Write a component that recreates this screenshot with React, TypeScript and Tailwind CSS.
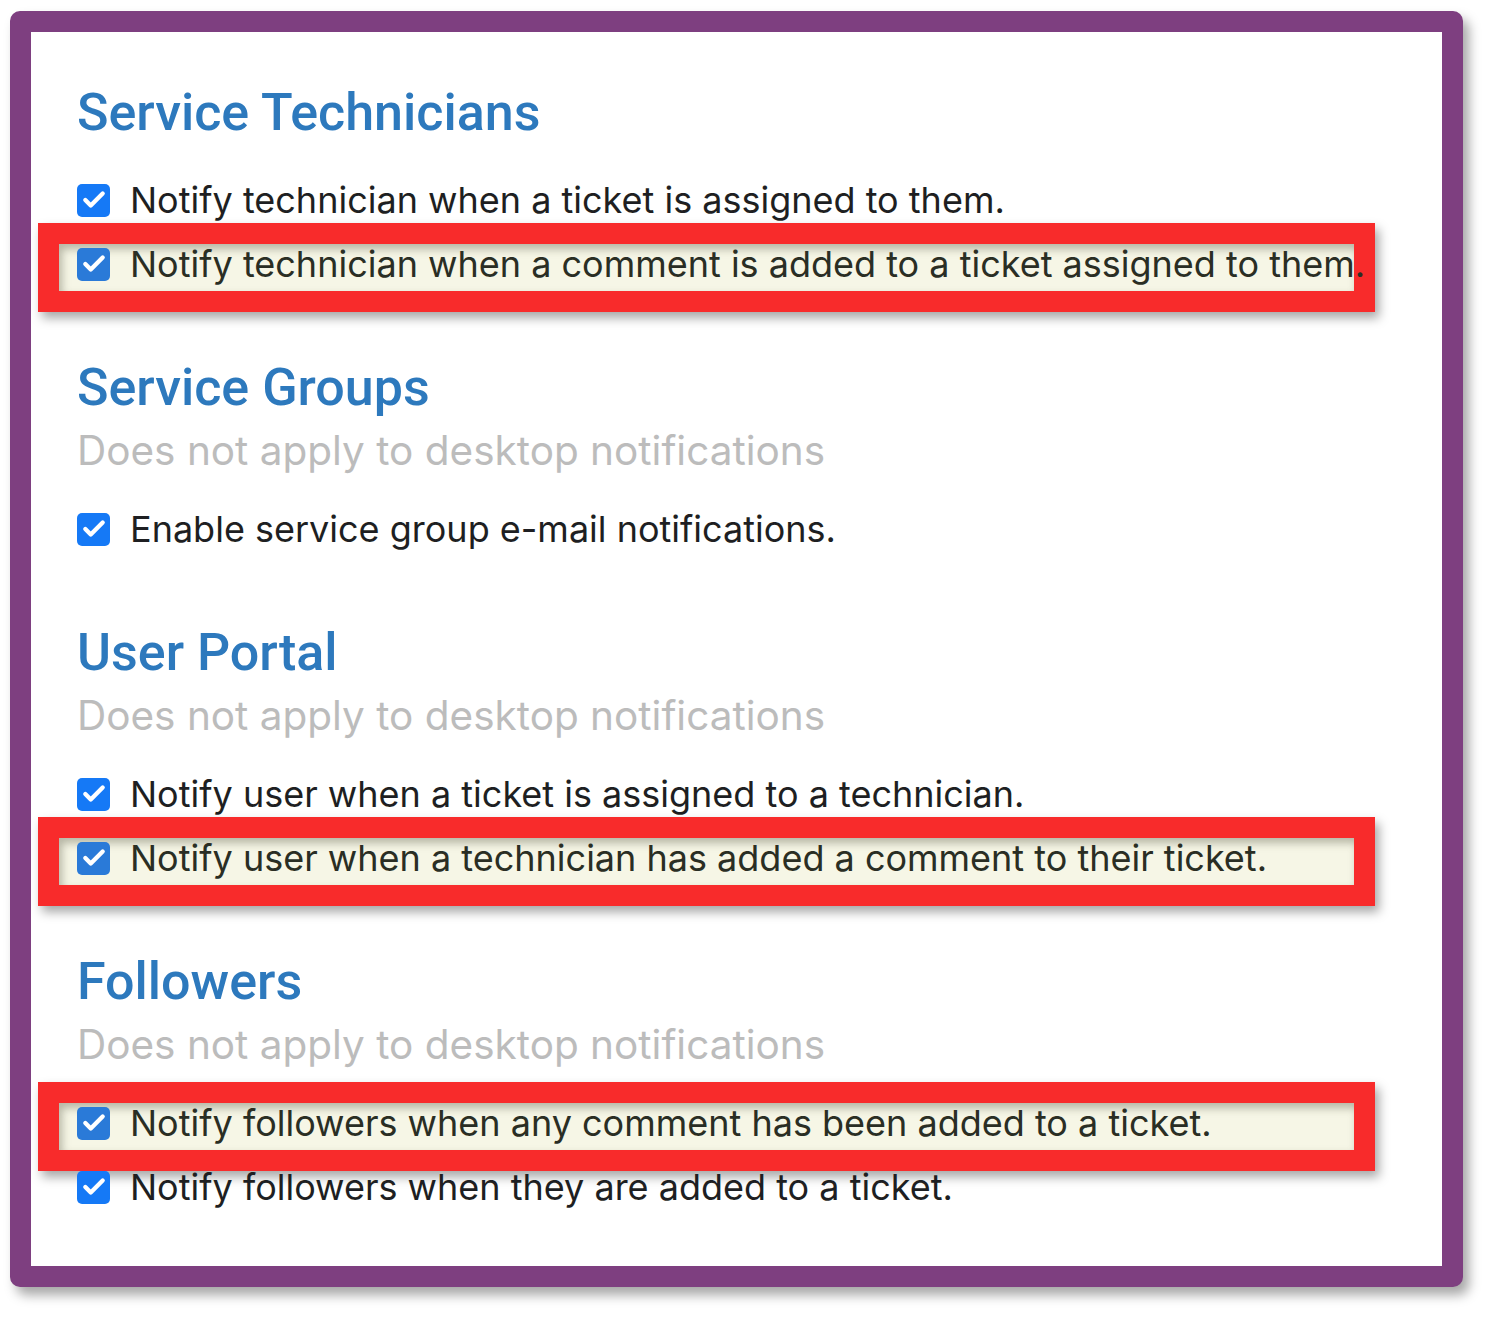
import { Check } from 'lucide-react';

type Row = { label: string; marked?: boolean };

const sections: { title: string; note?: string; rows: Row[] }[] = [
  {
    title: 'Service Technicians',
    rows: [
      { label: 'Notify technician when a ticket is assigned to them.' },
      { label: 'Notify technician when a comment is added to a ticket assigned to them.', marked: true },
    ],
  },
  {
    title: 'Service Groups',
    note: 'Does not apply to desktop notifications',
    rows: [{ label: 'Enable service group e-mail notifications.' }],
  },
  {
    title: 'User Portal',
    note: 'Does not apply to desktop notifications',
    rows: [
      { label: 'Notify user when a ticket is assigned to a technician.' },
      { label: 'Notify user when a technician has added a comment to their ticket.', marked: true },
    ],
  },
  {
    title: 'Followers',
    note: 'Does not apply to desktop notifications',
    rows: [
      { label: 'Notify followers when any comment has been added to a ticket.', marked: true },
      { label: 'Notify followers when they are added to a ticket.' },
    ],
  },
];

const Checkbox = ({ dim }: { dim?: boolean }) => (
  <span
    className={`relative flex h-[33px] w-[33px] shrink-0 items-center justify-center rounded-[5px] ${
      dim ? 'bg-[#2a7ad8]' : 'bg-[#1579f6]'
    }`}
  >
    <Check className="h-[26px] w-[26px] text-white" strokeWidth={4} />
  </span>
);

const OptionRow = ({ row }: { row: Row }) => (
  <div className="relative flex h-[64px] items-center gap-[20px]">
    {row.marked && (
      <div className="absolute left-[-39px] top-[-9px] h-[89px] w-[1337px] border-[21px] border-[#f82b2b] bg-[#f6f6e6] shadow-[4px_6px_10px_rgba(0,0,0,0.35),inset_3px_5px_8px_rgba(60,60,40,0.35)]" />
    )}
    <Checkbox dim={row.marked} />
    <span
      className={`relative whitespace-nowrap text-[36px] ${
        row.marked ? 'text-[#2a2e24]' : 'text-[#1e1f22]'
      }`}
    >
      {row.label}
    </span>
  </div>
);

export default function App() {
  return (
    <div className="h-[1320px] w-[1498px] bg-white pl-[10px] pt-[11px] font-['Inter',sans-serif]">
      <div className="h-[1276px] w-[1453px] rounded-[10px] border-[21px] border-[#7e3f80] bg-white shadow-[6px_8px_12px_rgba(0,0,0,0.35)]">
        <div className="flex flex-col pl-[46px] pt-[42px]">
          {sections.map((section, i) => (
            <div key={section.title} className={i > 0 ? 'mt-[53px]' : ''}>
              <h2 className="flex h-[78px] items-center font-['Roboto',sans-serif] text-[52px] font-medium text-[#2d79bd]">
                {section.title}
              </h2>
              {section.note && (
                <p className="flex h-[48px] items-center text-[40.5px] text-[#bcbcbc]">{section.note}</p>
              )}
              <div className={section.note ? 'mt-[22px]' : 'mt-[16px]'}>
                {section.rows.map((row) => (
                  <OptionRow key={row.label} row={row} />
                ))}
              </div>
            </div>
          ))}
        </div>
      </div>
    </div>
  );
}
